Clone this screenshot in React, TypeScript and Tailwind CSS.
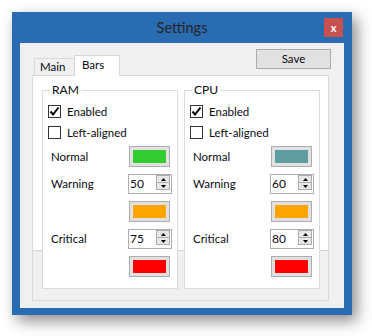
import React from 'react';

const Checkbox: React.FC<{ checked: boolean; label: string }> = ({ checked, label }) => (
  <div className="flex items-center h-[21px] pl-[5px]">
    <div className="w-[13px] h-[13px] border border-[#333333] bg-white flex items-center justify-center">
      {checked && (
        <svg width="11" height="11" viewBox="0 0 11 11">
          <path d="M1.5 5.5 L4 8.5 L9.5 1.5" fill="none" stroke="#000" strokeWidth="2" />
        </svg>
      )}
    </div>
    <span className="ml-[6px]">{label}</span>
  </div>
);

const Swatch: React.FC<{ color: string; mt: string }> = ({ color, mt }) => (
  <div className={`flex justify-end pr-[7px] ${mt}`}>
    <div className="w-[41px] h-[21px] border border-[#adadad] bg-[#e1e1e1] p-[3px]">
      <div className="w-full h-full" style={{ backgroundColor: color }} />
    </div>
  </div>
);

const Spinner: React.FC<{ value: number }> = ({ value }) => (
  <div className="w-[44px] h-[20px] border border-[#abadb3] bg-white flex items-start">
    <span className="flex-1 pl-[1px] leading-[18px] text-[12px]">{value}</span>
    <div className="w-[14px] h-[15px] mr-[1px] flex flex-col">
      <div className="flex-1 border border-[#acacac] bg-[#e8e8e8] flex items-center justify-center">
        <svg width="5" height="3" viewBox="0 0 5 3"><path d="M0 3 L2.5 0 L5 3 Z" fill="#000" /></svg>
      </div>
      <div className="flex-1 border border-t-0 border-[#acacac] bg-[#e8e8e8] flex items-center justify-center">
        <svg width="5" height="3" viewBox="0 0 5 3"><path d="M0 0 L5 0 L2.5 3 Z" fill="#000" /></svg>
      </div>
    </div>
  </div>
);

const Group: React.FC<{ title: string; normal: string; warning: number; critical: number }> = ({
  title,
  normal,
  warning,
  critical,
}) => (
  <div className="w-[136px] h-[199px] border border-[#dcdcdc] bg-white flex flex-col">
    <span className="-mt-[9px] ml-[7px] px-[2px] h-[16px] leading-[16px] bg-white w-fit text-[12px]">{title}</span>
    <div className="mt-[3px]">
      <Checkbox checked label="Enabled" />
      <Checkbox checked={false} label="Left-aligned" />
    </div>
    <div className="mt-[3px] h-[21px] flex items-center">
      <span className="ml-[8px]">Normal</span>
      <div className="ml-auto mr-[7px] w-[41px] h-[21px] border border-[#adadad] bg-[#e1e1e1] p-[3px]">
        <div className="w-full h-full" style={{ backgroundColor: normal }} />
      </div>
    </div>
    <div className="mt-[7px] h-[20px] flex items-center">
      <span className="ml-[8px]">Warning</span>
      <div className="ml-auto mr-[5px]">
        <Spinner value={warning} />
      </div>
    </div>
    <Swatch color="#ffa500" mt="mt-[7px]" />
    <div className="mt-[7px] h-[20px] flex items-center">
      <span className="ml-[8px]">Critical</span>
      <div className="ml-auto mr-[5px]">
        <Spinner value={critical} />
      </div>
    </div>
    <Swatch color="#ff0000" mt="mt-[7px]" />
  </div>
);

const App: React.FC = () => {
  return (
    <div className="w-[372px] h-[336px] bg-white pt-[12px] pl-[12px] font-['Lato',sans-serif] text-[11.5px] text-[#0a0a14]">
      <div className="w-[340px] h-[303px] bg-[#2a6cb1] flex flex-col px-[8px] pb-[7px] shadow-[5px_6px_14px_rgba(0,0,0,0.45)]">
        {/* Title bar */}
        <div className="h-[31px] grid grid-cols-[1fr_auto_1fr]">
          <div />
          <div className="flex items-center text-[14.5px] text-[#262626]">Settings</div>
          <div className="flex justify-end items-start pt-[6px] pr-[1px]">
            <div className="w-[19px] h-[19px] bg-[#c75050] flex items-center justify-center text-white font-bold text-[11px] leading-none">
              x
            </div>
          </div>
        </div>

        {/* Client area */}
        <div className="flex-1 bg-[#f0f0f0] pl-[12px] pr-[13px] pt-[6px]">
          <div className="flex justify-between items-start">
            <div className="flex items-end h-[26px] pl-[2px]">
              <div className="w-[40px] h-[17px] border-l border-t border-[#d9d9d9] bg-[#f0f0f0] pl-[5px] leading-[16px]">
                Main
              </div>
              <div className="relative z-10 -mb-px w-[46px] h-[21px] border-l border-t border-r border-[#d9d9d9] bg-white pl-[7px] leading-[18px]">
                Bars
              </div>
            </div>
            <button className="w-[75px] h-[20px] border border-[#adadad] bg-[#e1e1e1] leading-[18px]">Save</button>
          </div>

          {/* Tab page */}
          <div className="mr-[2px] h-[226px] border border-[#d9d9d9] bg-[linear-gradient(to_bottom,#ffffff_0,#ffffff_174px,#d5d5d5_174px,#d5d5d5_175px,#f0f0f0_175px)] flex gap-[6px] pl-[9px] pr-[8px] pt-[14px]">
            <Group title="RAM" normal="#33cc33" warning={50} critical={75} />
            <Group title="CPU" normal="#5f9ea0" warning={60} critical={80} />
          </div>
        </div>
      </div>
    </div>
  );
};

export default App;
